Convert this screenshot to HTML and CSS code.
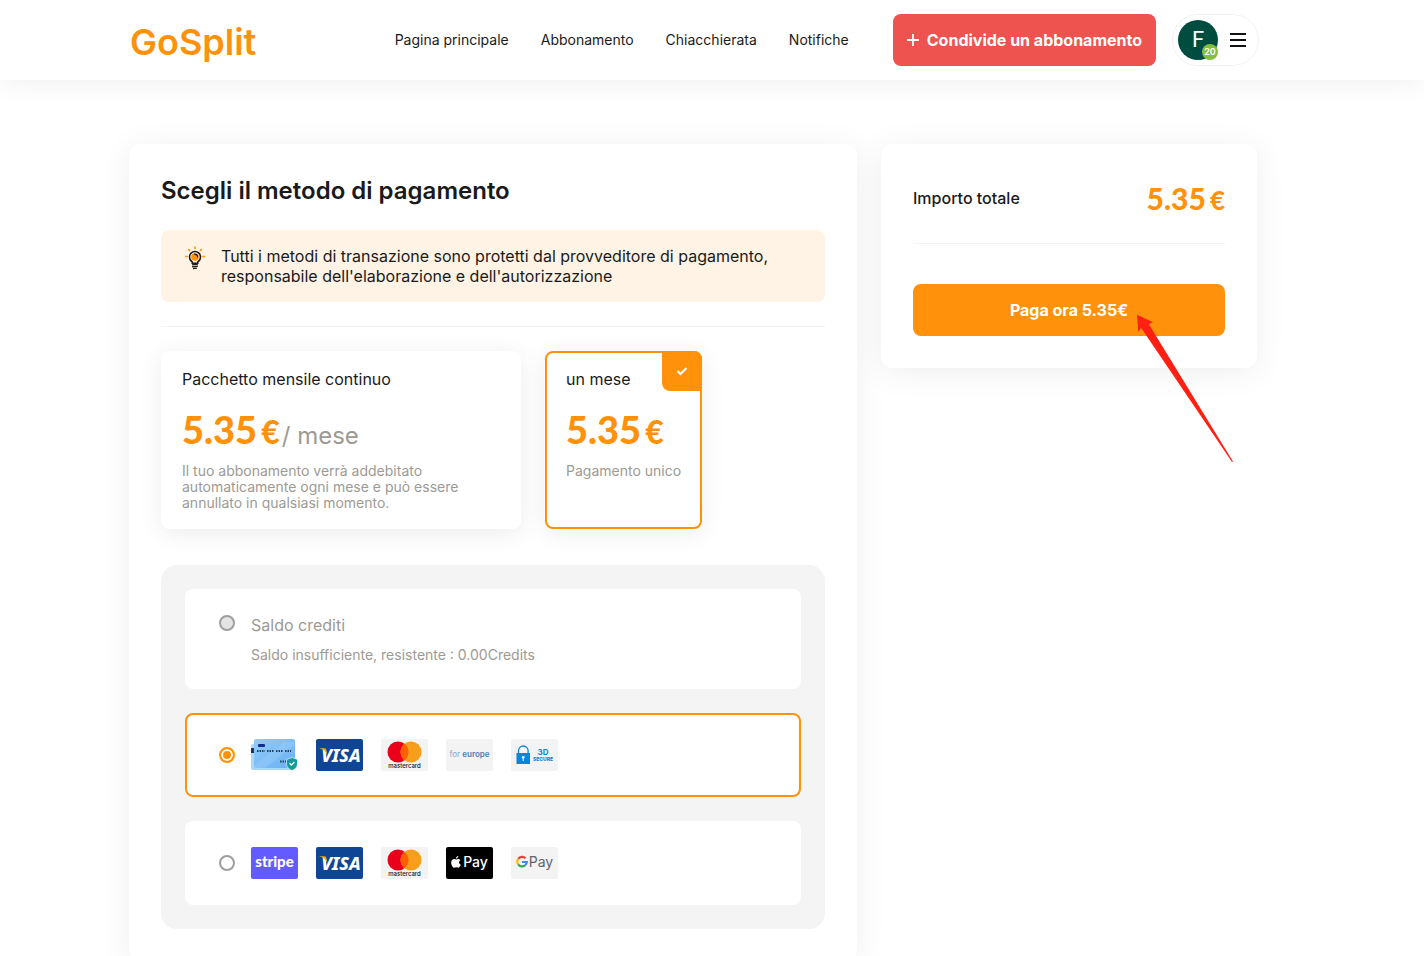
FILE: index.html
```html
<!DOCTYPE html>
<html lang="it">
<head>
<meta charset="utf-8">
<meta name="viewport" content="width=device-width, initial-scale=1">
<title>GoSplit</title>
<link rel="stylesheet" href="styles.css">
</head>
<body>
<div class="page">
  <header class="header">
    <a class="logo" href="#">GoSplit</a>
    <nav class="nav">
      <a href="#">Pagina principale</a>
      <a href="#">Abbonamento</a>
      <a href="#">Chiacchierata</a>
      <a href="#">Notifiche</a>
    </nav>
    <div class="actions">
      <button class="share" type="button">
        <svg width="12" height="12" viewBox="0 0 12 12" aria-hidden="true"><path d="M6 0v12M0 6h12" stroke="#fff" stroke-width="1.800"/></svg>
        Condivide un abbonamento
      </button>
      <button class="account" type="button" aria-label="Menu">
        <span class="avatar">F<span class="badge">20</span></span>
        <svg width="16" height="16" viewBox="0 0 16 16" aria-hidden="true"><path d="M0 2h16M0 8h16M0 14h16" stroke="#111" stroke-width="2"/></svg>
      </button>
    </div>
  </header>

  <main class="main">
    <section class="card">
      <h1 class="title">Scegli il metodo di pagamento</h1>
      <div class="notice">
        <svg class="bulb" width="20" height="24" viewBox="0 0 20 24" aria-hidden="true">
          <path d="M10 0.500v2.500M3.200 3.200l1.900 1.700M16.800 3.200l-1.900 1.700M0 10.500h2.800M17.200 10.500H20" stroke="#ff920a" stroke-width="1.600"/>
          <path d="M7.200 17.200v-1.400C5.400 14.700 4.500 13 4.500 11a5.500 5.500 0 0 1 11 0c0 2-.9 3.700-2.700 4.800v1.400z" fill="#fff3e5" stroke="#1a1a1a" stroke-width="1.500"/>
          <circle cx="10" cy="11" r="3.800" fill="#ff920a"/>
          <path d="M9 8.200c2.200-.2 3.600 1 3.800 3.200" fill="none" stroke="#1a1a1a" stroke-width="1.200"/>
          <path d="M7 18.800l6-.7M7 20.800l6-.7M8 22.600l4-.4" stroke="#1a1a1a" stroke-width="1.300"/>
        </svg>
        <p>Tutti i metodi di transazione sono protetti dal provveditore di pagamento, responsabile dell'elaborazione e dell'autorizzazione</p>
      </div>
      <hr class="rule">
      <div class="plans">
        <label class="plan plan-wide">
          <input type="radio" name="plan">
          <span class="plan-name">Pacchetto mensile continuo</span>
          <span class="price">5.35<span class="currency">€</span><span class="period">/ mese</span></span>
          <span class="plan-note">Il tuo abbonamento verrà addebitato automaticamente ogni mese e può essere annullato in qualsiasi momento.</span>
        </label>
        <label class="plan selected">
          <input type="radio" name="plan" checked>
          <span class="plan-name">un mese</span>
          <span class="price">5.35<span class="currency">€</span></span>
          <span class="plan-note">Pagamento unico</span>
          <span class="tick"><svg width="12" height="10" viewBox="0 0 12 10" aria-hidden="true"><path d="M1.500 5l3 3 6-6" fill="none" stroke="#fff" stroke-width="2"/></svg></span>
        </label>
      </div>
      <div class="methods">
        <label class="method method-credit">
          <input class="radio" type="radio" name="method" disabled>
          <span class="credit">
            <span class="credit-name">Saldo crediti</span>
            <span class="credit-note">Saldo insufficiente, resistente : 0.00Credits</span>
          </span>
        </label>
        <label class="method selected">
          <input class="radio" type="radio" name="method" aria-label="Carta" checked>
          <span class="logos">
            <svg width="47" height="32" viewBox="0 0 47 32" aria-hidden="true">
              <defs><linearGradient id="sky" x2="1" y2="1"><stop stop-color="#93cbfa"/><stop offset="1" stop-color="#68b0f3"/></linearGradient></defs>
              <rect x="0" y="5" width="42" height="26" rx="2" fill="#a9d8fd"/>
              <rect x="3" y="0" width="41" height="29" rx="2" fill="url(#sky)"/>
              <path d="M3 27L33 3h10v3L14 29H4z" fill="#b5dcfd" opacity=".25"/>
              <rect x="7" y="5" width="7" height="3" rx="1" fill="#142b8e"/>
              <rect x="0" y="9" width="3" height="5" fill="#26354d"/>
              <path d="M6 12h8M16 12h7M25 12h7M34 12h6" stroke="#24405f" stroke-width="2" stroke-dasharray="1.500 1"/>
              <path d="M29 22.500h6" stroke="#24405f" stroke-width="2" stroke-dasharray="1.500 1"/>
              <path d="M41 18.500l5.500 2v4.500c0 3.200-2.400 5.300-5.500 6.500-3.100-1.200-5.500-3.300-5.500-6.500v-4.500z" fill="#159b9b" stroke="#fff" stroke-width=".6"/>
              <path d="M38.600 24.300l1.800 1.700 3-3" fill="none" stroke="#fff" stroke-width="1.300"/>
            </svg>
            <svg width="47" height="32" viewBox="0 0 47 32" aria-hidden="true">
              <rect width="47" height="32" rx="2" fill="#0e4595"/>
              <text x="25" y="23" font-family="Noto Sans, sans-serif" font-weight="800" font-style="italic" font-size="18" text-anchor="middle" fill="#fff">VISA</text>
              <path d="M3 9.300h5.500c1.200 0 1.600.8 1.900 2l1 4.700C9.800 12.400 7 10.200 3 9.300z" fill="#f2ae14"/>
            </svg>
            <svg width="47" height="32" viewBox="0 0 47 32" aria-hidden="true">
              <rect width="47" height="32" rx="2" fill="#f3f3f3"/>
              <circle cx="17" cy="13" r="10.500" fill="#eb001b"/>
              <circle cx="30" cy="13" r="10.500" fill="#f79e1b"/>
              <path d="M23.500 4.750a10.500 10.500 0 0 1 0 16.500a10.500 10.500 0 0 1 0-16.500z" fill="#ff5f00"/>
              <text x="23.500" y="28.500" font-family="Inter, sans-serif" font-weight="500" font-size="6" text-anchor="middle" fill="#111">mastercard</text>
            </svg>
            <svg width="47" height="32" viewBox="0 0 47 32" aria-hidden="true">
              <rect width="47" height="32" rx="2" fill="#f3f3f3"/>
              <text x="23.500" y="18" font-family="Inter, sans-serif" font-size="8" text-anchor="middle" fill="#7fa3cc">for <tspan font-weight="600" fill="#4a7fba">europe</tspan></text>
            </svg>
            <svg width="47" height="32" viewBox="0 0 47 32" aria-hidden="true">
              <rect width="47" height="32" rx="2" fill="#f3f3f3"/>
              <path d="M7.500 15v-3.200a4.800 4.800 0 0 1 9.600 0V15" fill="none" stroke="#0c85d8" stroke-width="1.300"/>
              <rect x="5.500" y="14" width="13.500" height="11" fill="#0c85d8"/>
              <circle cx="12.200" cy="18.300" r="1.300" fill="#fff"/><path d="M12.200 18v4" stroke="#fff" stroke-width="1"/>
              <text x="32" y="16" font-family="Inter, sans-serif" font-weight="700" font-size="8" text-anchor="middle" fill="#0c85d8">3D</text>
              <text x="32" y="21.500" font-family="Inter, sans-serif" font-weight="800" font-size="5" text-anchor="middle" fill="#0c85d8">SECURE</text>
            </svg>
          </span>
        </label>
        <label class="method">
          <input class="radio" type="radio" name="method" aria-label="Stripe">
          <span class="logos">
            <svg width="47" height="32" viewBox="0 0 47 32" aria-hidden="true">
              <rect width="47" height="32" rx="2" fill="#635bff"/>
              <text x="23.500" y="20" font-family="Lato, sans-serif" font-weight="900" font-size="15" text-anchor="middle" fill="#fff">stripe</text>
            </svg>
            <svg width="47" height="32" viewBox="0 0 47 32" aria-hidden="true">
              <rect width="47" height="32" rx="2" fill="#0e4595"/>
              <text x="25" y="23" font-family="Noto Sans, sans-serif" font-weight="800" font-style="italic" font-size="18" text-anchor="middle" fill="#fff">VISA</text>
              <path d="M3 9.300h5.500c1.200 0 1.600.8 1.900 2l1 4.700C9.800 12.400 7 10.200 3 9.300z" fill="#f2ae14"/>
            </svg>
            <svg width="47" height="32" viewBox="0 0 47 32" aria-hidden="true">
              <rect width="47" height="32" rx="2" fill="#f3f3f3"/>
              <circle cx="17" cy="13" r="10.500" fill="#eb001b"/>
              <circle cx="30" cy="13" r="10.500" fill="#f79e1b"/>
              <path d="M23.500 4.750a10.500 10.500 0 0 1 0 16.500a10.500 10.500 0 0 1 0-16.500z" fill="#ff5f00"/>
              <text x="23.500" y="28.500" font-family="Inter, sans-serif" font-weight="500" font-size="6" text-anchor="middle" fill="#111">mastercard</text>
            </svg>
            <svg width="47" height="32" viewBox="0 0 47 32" aria-hidden="true">
              <rect width="47" height="32" rx="2" fill="#000"/>
              <path d="M12.300 9c.1 1.400-1.100 2.600-2.400 2.600C9.800 10.300 11 9.200 12.300 9zM14.300 13.300c-1.900 1.100-1.500 3.700.5 4.500-.6 1.600-1.500 2.900-2.600 2.900-.7 0-1-.4-1.900-.4s-1.200.4-1.900.4C6.800 20.700 5.200 18 5.200 15.700c0-2.300 1.400-3.600 2.900-3.600.9 0 1.600.5 2.200.5.500 0 1.300-.6 2.300-.5.700 0 1.300.4 1.700 1.200z" fill="#fff"/>
              <text x="29.500" y="20" font-family="Inter, sans-serif" font-weight="500" font-size="14" text-anchor="middle" fill="#fff">Pay</text>
            </svg>
            <svg width="47" height="32" viewBox="0 0 47 32" aria-hidden="true">
              <rect width="47" height="32" rx="2" fill="#f3f3f3"/>
              <g fill="none" stroke-width="2.200">
                <path d="M14.500 11.200A4.700 4.700 0 0 0 7.200 12" stroke="#ea4335"/>
                <path d="M7.200 12a4.700 4.700 0 0 0 0 5.400" stroke="#fbbc04"/>
                <path d="M7.200 17.400a4.700 4.700 0 0 0 6.800 1" stroke="#34a853"/>
                <path d="M14 18.400a4.700 4.700 0 0 0 1.800-3.400h-4.800" stroke="#4285f4"/>
              </g>
              <text x="30" y="20" font-family="Inter, sans-serif" font-size="14" text-anchor="middle" fill="#5f6368">Pay</text>
            </svg>
          </span>
        </label>
      </div>
    </section>

    <aside class="summary">
      <div class="total">
        <span class="total-name">Importo totale</span>
        <span class="total-price">5.35<span class="total-currency">€</span></span>
      </div>
      <hr class="rule total-rule">
      <button class="pay" type="button">Paga ora 5.35€</button>
      <svg class="arrow" width="97" height="149" viewBox="0 0 97 149" aria-hidden="true"><path d="M0 .7L16 8.300l-4.300 1.700L96 147.500l-1 .5L4 13.700 1.300 18z" fill="#ff2014"/></svg>
    </aside>
  </main>
</div>
</body>
</html>
```

FILE: styles.css
```css
* { box-sizing: border-box; }

body {
  margin: 0;
  font-family: Inter, "Liberation Sans", sans-serif;
  font-size: 16px;
  line-height: 20px;
  color: #1a1a1a;
  background: #fff;
}

button { font: inherit; border: 0; cursor: pointer; }
a { color: inherit; text-decoration: none; }
p { margin: 0; }
svg { display: block; flex: none; }

.page { display: flex; flex-direction: column; height: 100vh; }

.header {
  position: relative;
  z-index: 1;
  display: flex;
  flex: none;
  align-items: center;
  height: 80px;
  padding: 0 165px 0 130px;
  background: #fff;
  box-shadow: 0 4px 24px rgba(0, 0, 0, 0.06);
}
.logo { padding-top: 4px; font-size: 36px; line-height: 44px; font-weight: 600; color: #ff920a; }
.nav { display: flex; gap: 32px; margin-left: auto; font-size: 14px; white-space: nowrap; }
.actions { display: flex; gap: 16px; margin-left: 44px; }
.share {
  display: flex;
  align-items: center;
  gap: 8px;
  height: 52px;
  padding: 0 14px;
  border-radius: 8px;
  background: #ef5350;
  color: #fff;
  font-weight: 700;
  white-space: nowrap;
}
.account {
  display: flex;
  align-items: center;
  gap: 12px;
  height: 52px;
  padding: 0 12px 0 5px;
  border: 1px solid #f3f3f3;
  border-radius: 26px;
  background: #fff;
}
.avatar {
  position: relative;
  width: 40px;
  border-radius: 50%;
  background: #004d40;
  color: #fff;
  font-family: Roboto, sans-serif;
  font-size: 22px;
  line-height: 40px;
  text-align: center;
}
.badge {
  position: absolute;
  right: 0;
  bottom: 0;
  width: 16px;
  border-radius: 50%;
  background: #83bf3a;
  font-family: Inter, sans-serif;
  font-size: 9px;
  line-height: 16px;
  font-weight: 600;
}

.main {
  display: grid;
  flex: 1;
  grid-template-columns: minmax(0, 1fr) 376px;
  gap: 24px;
  align-items: start;
  min-height: 0;
  padding: 64px 167px 32px 129px;
  overflow-y: auto;
  scrollbar-width: none;
}
.card, .summary {
  padding: 32px;
  border-radius: 12px;
  background: #fff;
  box-shadow: 0 4px 32px rgba(0, 0, 0, 0.07);
}
.title { margin: 0 0 24px; font-size: 24px; line-height: 30px; font-weight: 600; }
.notice {
  display: flex;
  gap: 16px;
  padding: 16px 24px;
  border-radius: 8px;
  background: #fff3e5;
}
.rule { height: 1px; margin: 24px 0; border: 0; background: #f3f3f3; }

.plans { display: flex; gap: 24px; }
.plan {
  position: relative;
  display: flex;
  flex-direction: column;
  padding: 16px 19px;
  border: 2px solid #fff;
  border-radius: 8px;
  background: #fff;
  box-shadow: 0 4px 24px rgba(0, 0, 0, 0.08);
  cursor: pointer;
}
.plan-wide { width: 360px; padding-right: 40px; }
.plan input { position: absolute; inset: 0; margin: 0; opacity: 0; }
.price {
  height: 48px;
  margin: 16px 0 10px;
  font-family: Lato, Inter, sans-serif;
  font-size: 38px;
  line-height: 48px;
  font-weight: 900;
  color: #ff920a;
  white-space: nowrap;
}
.currency { margin-left: 4px; font-size: 32px; line-height: 32px; }
.period {
  margin-left: 2px;
  font-family: Inter, sans-serif;
  font-size: 24px;
  line-height: 24px;
  font-weight: 400;
  color: #9d9a94;
}
.plan-note { font-size: 14px; line-height: 16px; color: #9d9a94; }
.tick {
  position: absolute;
  top: -2px;
  right: -2px;
  display: grid;
  place-items: center;
  width: 40px;
  height: 40px;
  border-radius: 0 8px 0 8px;
  background: #ff920a;
}

.methods {
  display: grid;
  gap: 24px;
  margin-top: 36px;
  padding: 24px;
  border-radius: 16px;
  background: #f4f4f4;
}
.method {
  display: flex;
  align-items: center;
  gap: 16px;
  padding: 24px 32px;
  border: 2px solid #fff;
  border-radius: 8px;
  background: #fff;
}
.method-credit { align-items: flex-start; }
.selected { border-color: #ff920a; }
.radio {
  appearance: none;
  flex: none;
  width: 16px;
  height: 16px;
  margin: 0;
  border: 2px solid #9e9e9e;
  border-radius: 50%;
  background: #fff;
}
.radio:disabled { background: #e4e4e4; }
.radio:checked { border-color: #ff920a; background: #ff920a; box-shadow: inset 0 0 0 2px #fff; }
.credit { display: grid; gap: 12px; color: #9d9a94; }
.credit-note { font-size: 14px; line-height: 16px; }
.logos { display: flex; flex-wrap: wrap; gap: 18px; }

.summary { position: relative; }
.total {
  display: flex;
  align-items: center;
  justify-content: space-between;
  height: 43px;
}
.total-name { font-weight: 500; }
.total-price {
  font-family: Lato, Inter, sans-serif;
  font-size: 30px;
  line-height: 40px;
  font-weight: 900;
  color: #ff920a;
}
.total-currency { margin-left: 4px; font-size: 26px; line-height: 26px; }
.total-rule { margin-bottom: 40px; }
.pay {
  width: 100%;
  height: 52px;
  border-radius: 8px;
  background: #ff920a;
  color: #fff;
  font-weight: 700;
}
.arrow { position: absolute; top: 170px; left: 256px; pointer-events: none; }
```
